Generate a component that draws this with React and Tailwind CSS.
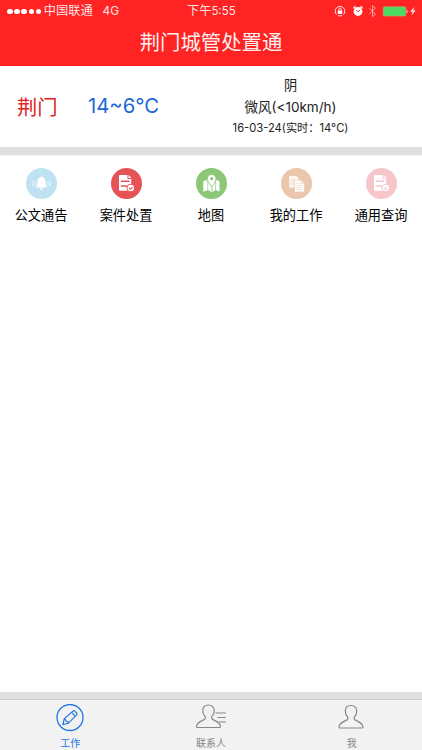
import React from "react";

const pageFont = "font-['Inter','Noto_Sans_CJK_SC',sans-serif]";

function StatusBar() {
  return (
    <div className="flex h-[22px] items-center text-[12.2px] leading-none text-[#ffe3e3]">
      <div className="flex w-[187px] items-center pt-px pl-[7px]">
        <div className="flex gap-[1.6px]">
          {[0, 1, 2, 3, 4].map((i) => (
            <span key={i} className="size-[5.6px] rounded-full bg-white" />
          ))}
        </div>
        <span className="ml-[2.5px] whitespace-nowrap">中国联通</span>
        <span className="ml-[10px] text-[11.8px]">4G</span>
      </div>
      <div className="w-[146px] pt-px whitespace-nowrap">
        下午<span className="text-[11.5px]">5:55</span>
      </div>
      <svg className="h-[14px] w-[84px]" viewBox="0 0 84 14" fill="none" stroke="#ffe5e5">
        <path d="M3.500 10.500A4.800 4.800 0 1 1 10.500 10.500M9.200 11.500A4.800 4.800 0 0 1 5 11.600" strokeWidth="1" />
        <rect x="4.800" y="6.400" width="4.400" height="3.600" fill="#fff" stroke="none" />
        <path d="M5.800 6.500V5.300a1.200 1.200 0 0 1 2.400 0v1.200" strokeWidth=".9" />
        <circle cx="25" cy="7.500" r="4.400" fill="#fff" stroke="none" />
        <path d="M20.500 4.400l2.200-2M29.500 4.400l-2.200-2" strokeWidth="1.600" />
        <path d="M23.300 6.200l1.800 1.600 2.100-2" stroke="#ff2323" strokeWidth="1" />
        <path d="M36.200 4.200l6.300 5.900-3 2.700V1.500l3 2.700-6.300 5.900" stroke="#ffaaaa" strokeWidth=".9" />
        <rect x="50.300" y="2.800" width="22.400" height="9.200" rx="1" fill="#4cd964" stroke="#bda866" strokeWidth=".7" />
        <path d="M74 5.800v3.200" stroke="#ffb0a0" strokeWidth="1.200" />
        <path d="M81.400 2.800l-4.300 4.900h2.600l-1.300 4 4.300-5.100h-2.400z" fill="#ffe5e5" stroke="none" />
      </svg>
    </div>
  );
}

function BellIcon() {
  return (
    <>
      <path d="M15.5 9c-3 .4-4.2 2.6-4.2 5.500 0 2.800-.6 4-1.700 5.100h11.800c-1.100-1.100-1.700-2.300-1.700-5.100 0-2.900-1.200-5.100-4.200-5.500z" fill="#fff" />
      <circle cx="15.5" cy="9.600" r="1" fill="#fff" />
      <path d="M14 20.200h3a1.500 1.500 0 0 1-3 0z" fill="#fff" />
      <path d="M9.400 13q-1 2.400 0 4.800M7.200 12.500q-1.300 3 0 5.800M21.600 13q1 2.400 0 4.800M23.800 12.500q1.300 3 0 5.800" stroke="#fff" strokeWidth=".8" fill="none" opacity=".85" />
    </>
  );
}

function DocumentIcon({ color, check }) {
  return (
    <>
      <path d="M9 7h7.500v4h3.700v11.700H9q-1 0-1-1V8q0-1 1-1z" fill="#fff" />
      <path d="M17.500 7l3 3h-3z" fill="#fff" />
      <path d="M10.500 13.200h7.500M10.500 18h5.300" stroke={color} strokeWidth="1.500" strokeLinecap="round" />
      <circle cx="19.800" cy="20" r="4.300" fill={color} />
      <circle cx="19.800" cy="20" r="3.300" fill="#fff" />
      <path
        d={check ? "M18.100 20l1.300 1.300 2.300-2.500" : "M18.400 21.200c0-3 2.400-3 2.400-.2M18.200 21.400h3.400"}
        stroke={color}
        strokeWidth={check ? "1.1" : ".8"}
        fill="none"
      />
    </>
  );
}

function MapIcon({ color }) {
  return (
    <>
      <path d="M7.300 13.200l4.200-1.500v10.500l-4.200 1.500zM12.200 12l3.400 2.500v9.400l-3.400-1.600zM16.300 14.400l3.100-1.800v9.800l-3.100 1.500zM20.100 11.800l3.400 1.500v10.300l-3.400-1.400z" fill="#fff" />
      <path d="M15.700 19.200c-1.500-3-4.300-5.400-4.300-8.500a4.300 4.300 0 0 1 8.600 0c0 3.100-2.800 5.500-4.300 8.500z" fill="#fff" stroke={color} strokeWidth=".8" />
      <circle cx="15.700" cy="10.700" r="1.600" fill={color} />
    </>
  );
}

function CopiesIcon({ color }) {
  return (
    <>
      <path d="M8.200 8h7.200l2.500 2.600v9.100H8.200z" fill="#fff" opacity=".85" />
      <path d="M13.500 12h6.700l3.200 3v9h-9.900z" fill="#fff" stroke={color} strokeWidth=".7" />
      <path d="M19.800 12.200v3.100h3.300" stroke={color} strokeWidth=".7" fill="none" />
      <path d="M9.600 11.500h3.100M9.600 13.800h3.100M9.600 16.100h3.100M15.200 15.200h3.300M15.200 17.400h6.300M15.200 19.600h6.300M15.200 21.700h6.300" stroke={color} strokeWidth=".6" />
    </>
  );
}

const actions = [
  { label: "公文通告", color: "#bfe2f3", icon: <BellIcon /> },
  { label: "案件处置", color: "#e65357", icon: <DocumentIcon color="#e65357" check /> },
  { label: "地图", color: "#8bc777", icon: <MapIcon color="#8bc777" /> },
  { label: "我的工作", color: "#e9c6ac", icon: <CopiesIcon color="#e9c6ac" /> },
  { label: "通用查询", color: "#f6c6ca", icon: <DocumentIcon color="#f6c6ca" /> },
];

const personPath =
  "M14 2c-3.700 0-5.700 2.300-5.700 5.700 0 2.300.7 4.100 2.300 5.700.7 1.100.1 2.800-1.400 3.500C6.500 18.300 2.500 19.200 2 23.500q0 1 1 1h22q1 0 1-1c-.5-4.300-4.500-5.200-7.200-6.600-1.500-.7-2.100-2.400-1.400-3.500 1.600-1.600 2.300-3.400 2.300-5.700C19.700 4.300 17.700 2 14 2z";

function Tab({ label, active, children }) {
  return (
    <div className={`flex flex-1 flex-col items-center pt-[4px] text-[10px] leading-[12px] ${active ? "text-[#2475df]" : "text-[#888888]"}`}>
      <svg className="h-[28px] w-[32px]" viewBox="0 0 32 28" fill="none" stroke="currentColor" strokeWidth="1.2">
        {children}
      </svg>
      <span className="mt-[5px]">{label}</span>
    </div>
  );
}

export default function App() {
  return (
    <div className={`flex h-[750px] w-[422px] flex-col overflow-hidden bg-white text-[#222222] ${pageFont}`}>
      <header className="h-[66px] shrink-0 bg-[#ff2323]">
        <StatusBar />
        <h1 className="mt-[6px] text-center text-[20.4px] leading-[30px] font-normal text-[#fff0f0]">荆门城管处置通</h1>
      </header>

      <section className="flex h-[81px] shrink-0 items-center">
        <div className="w-[88px] pt-[3px] pl-[17px] text-[20.3px] text-[#e42020]">荆门</div>
        <div className="w-[92px] text-[20.3px] whitespace-nowrap text-[#1d67d8]">14~6°C</div>
        <div className="flex w-[221px] flex-col items-center text-[13.2px] leading-[22px] whitespace-nowrap">
          <span>阴</span>
          <span className="text-[13.500px]">微风(&lt;10km/h)</span>
          <span className="text-[11.200px] leading-[21px]">16-03-24(实时：14°C)</span>
        </div>
      </section>
      <div className="h-[9px] shrink-0 border-b border-[#f1f1f1] bg-[#e0e0e0]" />

      <main className="flex flex-1 items-start justify-center pt-[12px]">
        {actions.map(({ label, color, icon }) => (
          <div key={label} className="flex w-[85px] shrink-0 flex-col items-center">
            <svg className="size-[31px]" viewBox="0 0 31 31">
              <circle cx="15.5" cy="15.5" r="15.5" fill={color} />
              {icon}
            </svg>
            <span className="mt-[6px] text-[13.2px] leading-[20px] whitespace-nowrap text-black">{label}</span>
          </div>
        ))}
      </main>

      <div className="h-[7px] shrink-0 bg-[#e0e0e0]" />
      <nav className="flex h-[51px] shrink-0 border-t border-[#cccccc] bg-[#f2f2f2]">
        <Tab label="工作" active>
          <circle cx="16" cy="13.5" r="13" strokeWidth="1.3" />
          <path d="M9 20.500l1.200-5.600 8.700-7.800q1-.8 2 .2l1.700 1.700q.9 1 0 1.900l-8.300 8.400zM17.500 8.300l3.900 4M10.200 14.900l1.200.5.7 1.600 1.700.7.5 1.600" strokeWidth="1.2" />
        </Tab>
        <Tab label="联系人">
          <g transform="translate(-.5 -1)">
            <path d={personPath} />
            <path d="M21 10h10.300M23 14.500h8.300M24.500 19h6.800" />
          </g>
        </Tab>
        <Tab label="我">
          <path d={personPath} transform="translate(1 -.5)" />
        </Tab>
      </nav>
    </div>
  );
}
